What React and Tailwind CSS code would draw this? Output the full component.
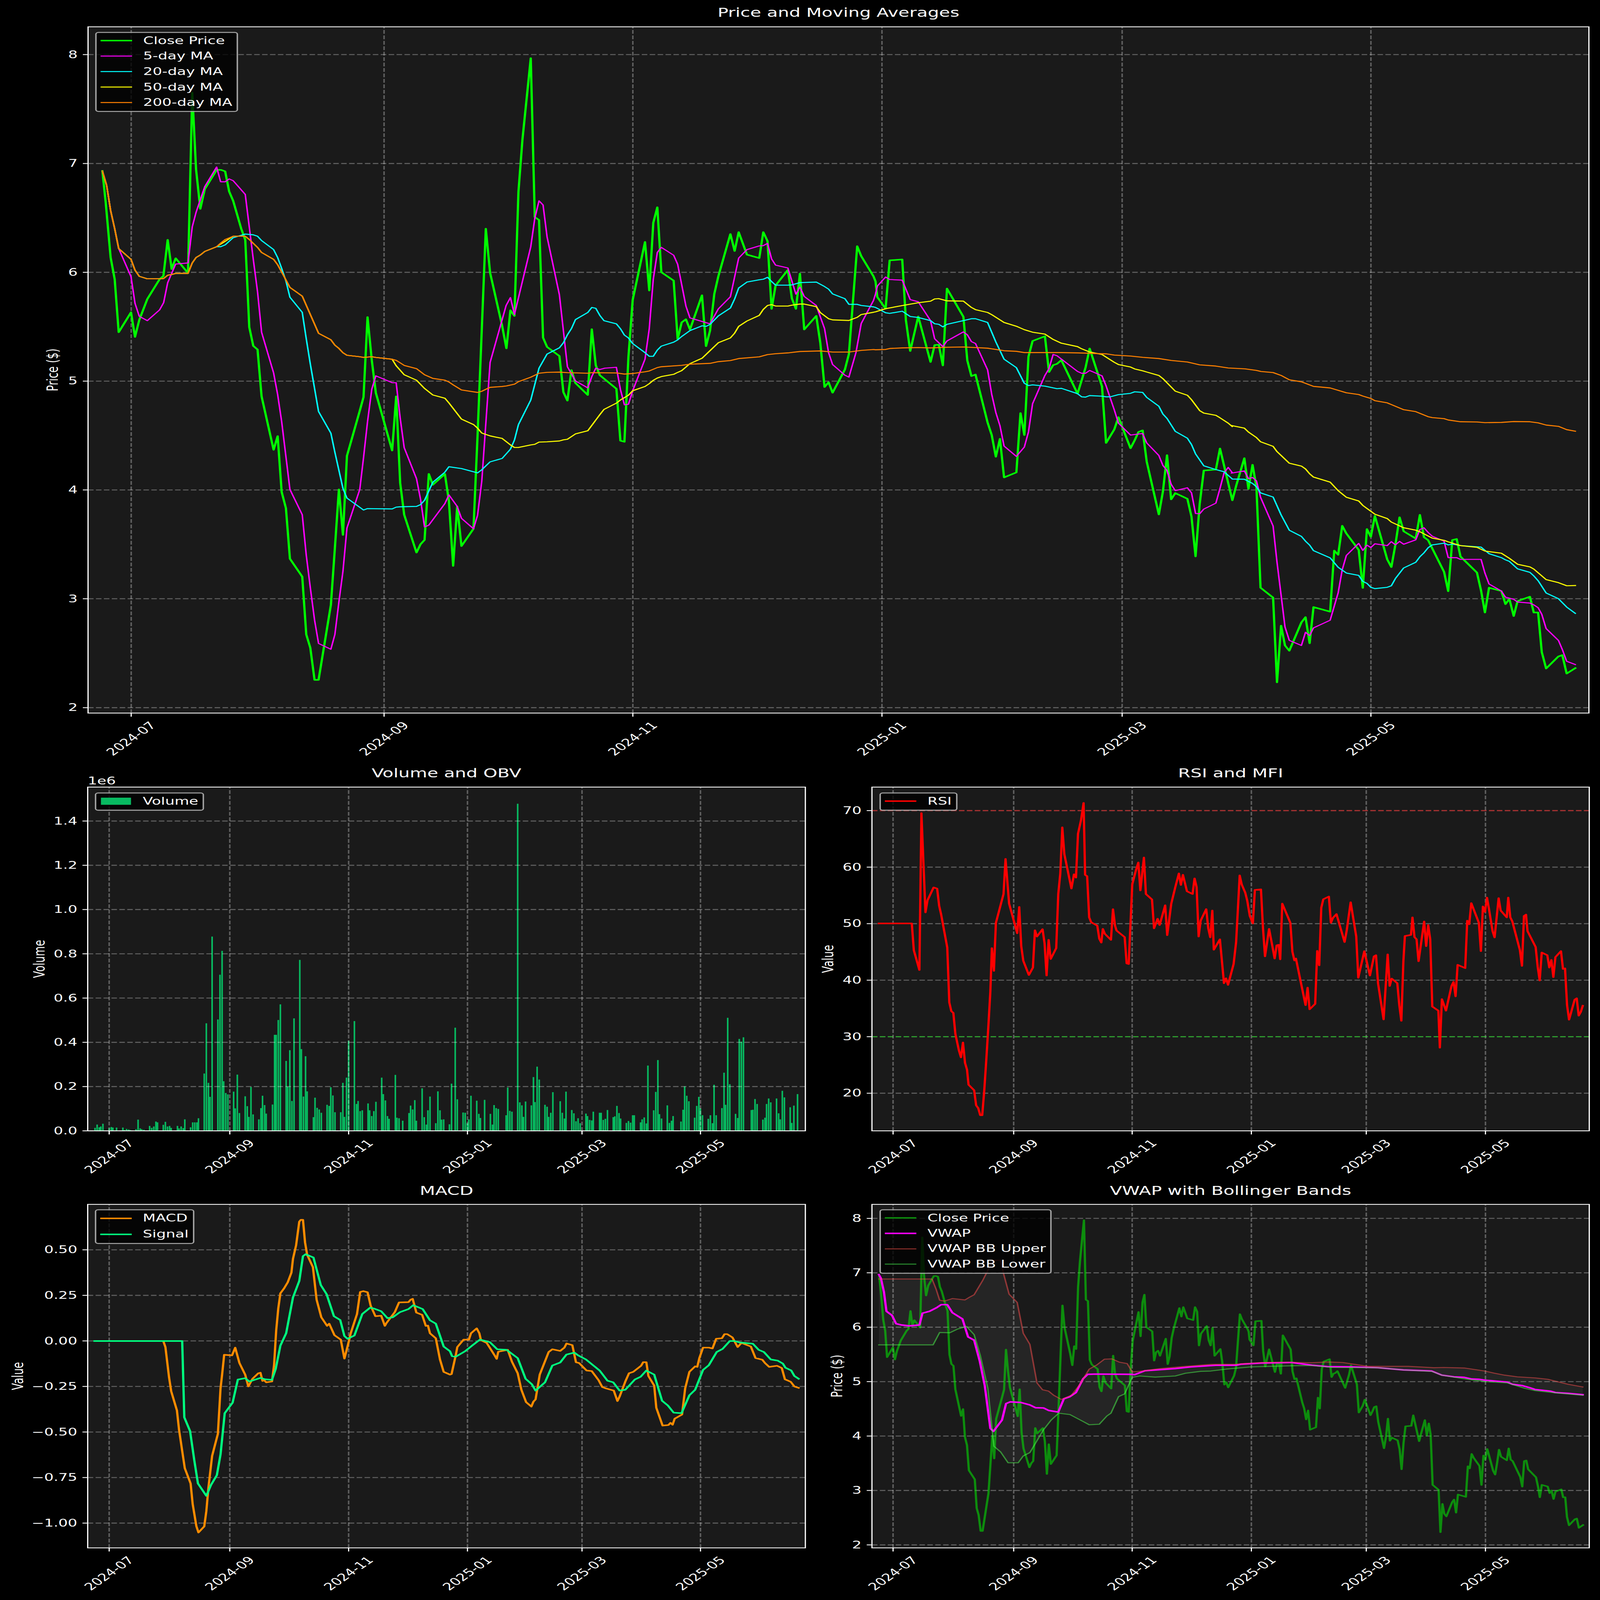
import React, { useState, useEffect } from 'react';

// reference traces: read off zoomed crops, "x,y" in crop pixels
const parse = (s, x0, y0, sx, sy) =>
  s.trim().split(/\s+/).map((p) => {
    const [a, b] = p.split(',').map(Number);
    return [x0 + a * sx, y0 + b * sy];
  });
const A = (s) => parse(s, 246, 600, 1100 / 1568, 2300 / 1568);
const B = (s) => parse(s, 1346, 200, 1100 / 1568, 1800 / 1568);
const C = (s) => parse(s, 2446, 800, 1000 / 1568, 2000 / 1568);
const D = (s) => parse(s, 3440, 1500, 1000 / 1568, 1400 / 1568);
const RZ = (s) => parse(s, 2250, 3050, 2220 / 1568, 1750 / 1568);
const MZ = (s) => parse(s, 0, 4750, 2300 / 1568, 1757 / 1568);
const VZ = (s) => parse(s, 2250, 4750, 2220 / 1568, 1757 / 1568);

const close = [
  ...A(`57,65 70,150 90,305 106,365 122,512 171,457 187,525 204,478 236,420 285,365 300,356 317,256 333,337 349,307 398,348 415,-152 430,60 447,170 465,115 512,62 530,62 546,66 562,122 578,148 610,225 626,256 642,498 658,550 675,560 691,690 739,838 755,800 771,955 788,1000 804,1140 853,1190 869,1350 885,1387 902,1476 918,1476 967,1268 983,1110 999,948 1015,1074 1031,855 1082,730 1097,692 1113,470 1130,590 1146,680 1211,840 1227,690 1243,930 1259,1018 1308,1123 1324,1100 1340,1088 1357,905 1373,935 1421,905 1437,980 1454,1160 1470,995 1487,1105 1535,1057 1551,800`),
  ...B(`16,636 33,792 81,980 98,1060 114,925 130,945 146,505 162,320 195,32 211,595 228,605 244,1022 260,1055 309,1087 325,1215 341,1245 357,1137 373,1183 422,1225 438,992 454,1120 470,1155 536,1203 552,1387 568,1391 584,1090 601,888 650,683 667,855 683,615 699,560 715,790 764,820 780,1027 796,968 813,957 829,993 877,872 893,1052 909,997 926,867 942,805 990,655 1007,715 1023,648 1056,728 1105,740 1121,648 1138,680 1154,920 1170,837 1219,782 1235,883 1251,920 1267,795 1284,993 1332,945 1348,1040 1365,1197 1381,1180 1397,1217 1446,1135 1462,1080 1495,698 1511,733 1560,805`),
  ...C(`0,270 8,320 44,357 62,203 117,200 133,393 152,492 187,382 241,527 259,473 277,472 295,538 313,293 385,383 402,522 420,572 438,567 491,720 509,760 527,829 545,772 563,895 617,879 635,690 652,760 670,510 688,460 742,445 760,559 778,537 795,533 814,521 885,628 903,585 920,545 938,484 992,605 1010,785 1046,742 1064,703 1117,802 1135,777 1152,750 1170,745 1188,845 1241,1013 1259,940 1277,824 1295,965 1313,945 1366,963 1384,1020 1402,1147 1420,980 1438,873 1491,870 1509,803 1563,968`),
  ...D(`22,530 57,407 75,547 93,437 110,540 128,997 183,1042 200,1428 218,1170 235,1260 254,1284 307,1155 325,1131 343,1250 360,1085 433,1106 451,828 468,847 486,715 504,750 558,825 576,998 594,730 611,765 629,670 683,868 701,903 719,800 737,676 755,740 808,773 826,665 844,767 862,780 932,925 950,1013 968,780 987,775 1004,855 1076,928 1094,1010 1111,1110 1129,997 1183,1012 1201,1072 1218,1048 1237,1126 1254,1058 1308,1038 1325,1110 1344,1110 1360,1290 1379,1365 1433,1310 1450,1304 1469,1388 1507,1363`),
];

const ma5 = [
  ...A(`57,65 74,105 90,175 106,225 122,280 171,358 187,432 204,468 236,480 285,450 301,430 317,375 349,323 398,320 415,220 430,180 465,108 512,54 528,95 546,95 562,87 578,92 626,130 642,220 658,310 675,400 691,512 739,625 755,685 771,760 804,948 853,1018 869,1130 885,1220 902,1310 918,1375 967,1391 983,1350 999,1260 1015,1175 1031,1055 1082,948 1097,860 1113,760 1130,670 1146,633 1211,652 1227,652 1243,750 1259,832 1308,918 1324,975 1340,1052 1357,1047 1421,987 1437,963 1470,995 1487,1028 1535,1057 1551,1020`),
  ...B(`0,1530 33,1110 97,908 114,880 130,940 195,700 211,600 228,537 244,552 260,665 309,870 341,1125 373,1175 422,1200 438,1160 454,1130 470,1135 490,1130 536,1127 552,1205 568,1260 584,1258 601,1210 650,1098 667,990 683,815 699,720 715,702 764,730 780,762 813,910 829,952 909,973 942,920 990,877 1023,740 1056,710 1105,697 1121,696 1138,688 1154,743 1170,765 1219,775 1251,868 1267,843 1284,876 1332,908 1365,990 1381,1075 1397,1117 1446,1155 1462,1162 1490,1075 1511,972 1560,890`),
  ...C(`0,310 8,285 44,256 62,264 117,266 152,328 187,335 241,395 259,453 295,478 313,460 385,431 402,440 420,462 438,468 491,552 509,630 527,688 545,730 563,795 617,828 652,798 670,750 688,660 742,570 760,548 778,503 795,507 885,557 903,563 920,563 938,554 992,571 1010,603 1046,680 1064,722 1117,760 1170,755 1188,785 1241,825 1259,857 1277,873 1295,917 1313,937 1366,928 1384,944 1402,1010 1420,1011 1438,996 1491,977 1509,930 1527,880 1545,863 1563,880`),
  ...D(`0,475 57,465 75,500 93,495 110,510 128,585 183,716 200,880 218,1030 235,1175 254,1237 307,1260 325,1200 343,1215 360,1180 433,1145 468,1020 486,915 504,850 558,795 576,827 594,803 611,814 629,797 683,805 701,787 719,802 737,786 755,799 808,779 826,732 844,724 862,745 880,762 932,785 950,860 987,860 1004,868 1094,868 1111,930 1129,980 1183,1012 1201,1040 1237,1050 1254,1062 1308,1067 1325,1075 1344,1088 1360,1118 1379,1183 1433,1237 1450,1278 1469,1332 1507,1347`),
];

const ma200Head = `57,65 74,105 90,175 106,225 122,280 171,310 187,340 204,357 236,364 285,364 301,363 317,354 333,352 349,349 398,349 415,320 430,305 447,298 465,288 512,275`;

const ma20 = [
  ...A(`${ma200Head} 528,275 546,270 578,250 626,240 658,242 675,246 691,258 739,283 755,305 771,335 788,370 804,415 853,457 869,530 885,600 918,732 967,792 983,845 1015,945 1031,972 1097,1005 1113,1001 1211,1002 1227,997 1243,996 1308,995 1324,990 1340,978 1373,928 1421,900 1437,885 1487,890 1551,902`),
  ...B(`0,1490 33,1462 81,1450 114,1417 130,1385 146,1330 195,1243 228,1130 260,1080 309,1058 325,1040 341,1012 357,990 373,958 422,933 438,915 454,918 470,943 487,962 536,973 552,990 568,1013 584,1023 601,1043 650,1075 667,1088 683,1088 699,1066 715,1052 764,1038 780,1030 796,1018 829,997 877,980 893,982 909,975 942,945 990,917 1007,885 1023,846 1056,825 1105,817 1121,815 1138,808 1154,823 1170,836 1219,836 1235,835 1267,827 1332,825 1365,841 1381,850 1397,867 1446,884 1462,904 1495,904 1511,908 1560,913`),
  ...C(`0,353 44,370 62,372 117,365 152,382 187,385 241,395 259,405 277,407 295,415 313,407 385,395 420,389 438,389 491,401 527,463 563,518 617,545 652,595 670,602 688,600 742,604 795,612 814,611 885,628 903,638 920,639 938,634 992,636 1010,638 1028,638 1064,631 1117,627 1135,622 1170,624 1188,640 1241,668 1259,693 1277,707 1313,748 1366,770 1384,790 1402,820 1438,858 1491,870 1527,877 1563,900`),
  ...D(`4,502 57,503 93,522 110,537 128,565 183,584 218,665 254,735 307,763 325,785 343,803 360,828 433,861 468,904 504,930 558,941 576,968 594,977 611,995 629,1001 683,995 701,988 719,955 755,907 808,881 826,856 844,838 862,815 880,802 932,794 950,802 968,798 1004,805 1094,812 1129,842 1183,860 1201,870 1218,877 1254,911 1308,927 1325,943 1344,965 1379,1021 1433,1047 1469,1085 1507,1114`),
];

const ma50 = [
  ...A(`${ma200Head} 578,246 626,246 642,255 675,277 691,291 739,310 755,325 771,345 804,388 853,412 918,515 967,533 983,548 999,557 1015,569 1031,576 1082,580 1097,582 1130,580 1146,582 1211,587 1227,605 1259,630 1308,645 1340,668 1373,686 1421,695 1437,708 1487,753 1535,768 1551,778`),
  ...B(`0,1360 33,1370 81,1379 114,1402 130,1411 146,1411 195,1402 211,1400 228,1392 260,1391 309,1388 325,1384 341,1382 373,1363 422,1352 470,1295 487,1276 536,1254 552,1243 584,1226 601,1210 650,1195 667,1185 683,1173 699,1165 715,1160 764,1152 780,1145 796,1139 829,1114 877,1095 909,1068 942,1040 990,1023 1007,1006 1023,982 1056,963 1105,943 1121,922 1138,908 1154,905 1170,910 1219,910 1235,907 1267,903 1284,903 1332,912 1348,933 1381,955 1397,959 1462,961 1495,950 1511,940 1560,932`),
  ...C(`0,367 44,357 117,347 187,338 241,333 259,326 277,325 313,332 385,333 420,353 438,360 491,369 509,376 563,401 617,413 652,424 688,432 742,438 778,455 814,467 885,478 903,485 938,495 992,503 1046,528 1064,535 1117,543 1135,549 1170,555 1188,559 1241,570 1259,580 1313,620 1366,633 1384,647 1420,682 1438,690 1491,697 1509,705 1545,722 1563,733`),
  ...D(`0,258 57,270 75,288 110,313 128,332 183,353 200,377 254,430 307,443 325,456 343,478 360,493 433,516 468,555 504,585 558,602 576,622 629,662 683,682 701,698 755,724 808,735 826,742 880,771 932,781 950,788 1004,805 1076,813 1111,830 1183,840 1218,863 1254,890 1308,902 1325,912 1379,960 1433,974 1469,988 1507,987`),
];

const ma200 = [
  ...A(`${ma200Head} 528,265 546,255 578,246 626,246 642,255 675,277 691,291 739,310 755,325 771,345 804,388 853,412 918,515 967,533 983,548 999,557 1015,569 1031,576 1082,580 1097,582 1130,580 1146,582 1211,587 1227,590 1259,604 1308,613 1340,630 1373,640 1421,645 1437,650 1454,658 1487,672 1551,679`),
  ...B(`0,1212 16,1205 33,1198 81,1195 98,1193 130,1187 146,1178 195,1162 228,1148 260,1145 309,1144 341,1146 422,1148 438,1146 536,1147 568,1151 601,1149 650,1143 667,1140 699,1128 715,1125 796,1120 829,1116 909,1113 942,1107 990,1103 1023,1096 1105,1090 1138,1082 1170,1079 1219,1076 1267,1071 1348,1069 1397,1073 1462,1073 1511,1067 1560,1064`),
  ...C(`0,488 44,487 62,484 117,482 187,481 241,482 313,480 385,479 438,481 491,483 563,491 617,493 652,497 814,497 885,498 1010,501 1046,505 1117,508 1170,512 1241,516 1295,522 1366,527 1420,536 1491,540 1545,546`),
  ...D(`60,0 110,7 130,12 183,17 218,30 254,50 307,59 360,80 433,87 504,109 558,117 576,124 611,135 629,145 683,155 755,186 808,195 862,218 880,222 932,227 950,233 1004,241 1076,242 1111,245 1183,244 1237,240 1308,241 1344,246 1379,256 1433,262 1469,277 1507,284`),
];

const rsi = RZ(`145,632 210,632 214,730 225,802 229,230 237,592 241,548 253,501 260,505 264,568 268,600 280,720 284,920 288,952 292,958 296,1035 303,1095 307,1120 311,1066 315,1140 319,1165 322,1220 333,1240 337,1295 341,1305 345,1331 349,1331 353,1240 357,1130 361,1010 365,880 368,722 372,805 376,630 391,525 395,397 402,560 414,640 418,668 422,572 426,715 430,768 441,820 449,793 453,657 457,680 468,653 472,705 476,822 480,692 484,762 495,722 499,525 503,450 507,282 511,380 515,415 525,505 530,453 534,465 538,305 544,255 549,193 552,455 556,460 560,610 564,628 576,640 580,688 584,702 587,652 591,670 603,692 607,580 611,640 614,658 630,682 634,778 638,780 645,490 652,440 657,410 661,512 668,392 672,525 684,545 688,650 695,615 699,638 710,566 714,675 722,560 730,500 737,450 741,492 745,455 753,515 764,525 768,468 772,500 776,680 780,622 791,580 795,650 799,683 803,585 806,728 818,690 826,850 830,832 834,856 845,780 850,700 857,457 861,490 868,520 872,550 877,605 883,632 887,510 899,508 903,650 907,752 915,652 922,720 926,760 930,712 934,710 937,763 941,560 957,630 961,735 965,767 968,760 987,930 991,866 995,945 1006,925 1010,732 1014,785 1018,575 1022,544 1033,534 1037,630 1041,612 1048,598 1064,700 1068,660 1076,555 1087,680 1091,830 1103,733 1114,822 1122,752 1126,748 1130,850 1141,982 1149,745 1153,860 1157,833 1168,850 1172,930 1176,987 1180,770 1183,678 1195,674 1198,610 1202,682 1206,690 1210,770 1221,625 1225,715 1229,638 1233,690 1237,935 1249,950 1252,1085 1256,908 1264,950 1275,860 1279,845 1283,898 1287,783 1302,795 1306,622 1310,635 1314,558 1329,630 1333,733 1337,570 1341,590 1345,538 1349,580 1356,660 1360,683 1368,540 1372,585 1384,610 1387,538 1391,610 1395,625 1410,730 1414,787 1418,605 1422,600 1425,660 1441,718 1445,790 1449,840 1453,738 1464,748 1468,793 1472,765 1476,828 1480,755 1491,733 1495,798 1499,796 1503,930 1507,983 1518,910 1522,905 1526,968 1530,955 1534,932`);

const macd = MZ(`180,628 311,628 315,650 322,760 326,810 337,880 341,950 348,1040 352,1090 363,1145 367,1220 374,1300 378,1323 389,1301 393,1245 397,1160 404,1045 415,965 420,800 423,750 427,678 442,680 448,652 456,708 467,750 473,793 481,765 492,745 496,743 500,773 503,770 507,778 518,775 522,715 526,590 530,510 534,455 541,437 548,415 555,380 558,330 564,280 570,195 573,188 577,188 581,270 585,315 596,360 603,478 612,542 623,573 627,565 637,607 649,623 656,692 663,640 668,600 680,530 686,450 692,447 700,451 706,500 715,538 726,536 733,573 736,563 752,523 760,488 778,487 782,478 786,475 793,525 804,533 811,573 815,572 819,600 830,618 838,695 845,740 857,750 860,748 868,680 871,650 883,623 893,623 897,600 908,582 913,600 916,625 927,635 942,680 946,693 949,667 967,660 975,703 986,745 993,805 1002,850 1012,866 1016,848 1020,840 1028,750 1045,668 1052,658 1067,664 1075,652 1079,637 1090,643 1097,705 1103,708 1117,735 1127,737 1140,770 1147,795 1154,800 1169,808 1176,846 1180,830 1191,775 1198,745 1206,740 1221,718 1225,705 1231,705 1235,755 1246,790 1250,870 1262,935 1273,933 1277,925 1281,932 1285,910 1299,895 1305,800 1313,740 1324,720 1328,722 1332,690 1339,652 1350,652 1357,655 1364,620 1375,618 1380,603 1385,603 1395,615 1405,650 1412,635 1430,648 1439,690 1452,696 1457,708 1465,722 1480,718 1489,726 1495,767 1506,776 1513,793 1521,798`);

const signal = MZ(`180,628 347,628 351,905 362,955 370,1060 377,1145 393,1190 402,1150 413,1115 420,1040 428,890 443,852 453,768 467,763 475,775 496,762 505,767 518,769 525,730 534,645 545,600 558,470 570,410 577,320 582,313 597,325 611,425 622,458 636,538 648,552 656,610 662,620 675,608 690,530 705,507 712,510 726,520 738,545 748,542 762,523 778,512 787,498 805,512 819,553 830,565 845,648 857,665 861,683 868,685 886,665 899,645 914,623 933,632 947,658 965,660 986,690 1001,765 1013,785 1020,808 1038,778 1052,717 1067,706 1079,677 1094,670 1101,680 1116,695 1142,735 1157,772 1168,778 1180,808 1191,805 1209,768 1220,758 1231,735 1246,750 1261,845 1272,862 1283,888 1298,890 1313,825 1324,805 1339,733 1350,716 1365,668 1376,657 1390,628 1399,628 1408,633 1434,638 1445,660 1455,668 1468,695 1481,699 1491,710 1496,725 1507,735 1513,755 1521,765`);

const vwap = VZ(`145,387 149,400 155,450 160,520 171,535 179,565 190,570 205,573 225,570 231,527 245,520 259,507 268,496 280,496 290,525 310,548 321,613 333,625 344,700 354,790 365,945 371,956 388,915 396,855 404,849 425,851 443,860 454,870 470,871 480,880 499,886 510,838 522,830 534,815 548,765 557,749 572,748 640,749 650,750 670,736 700,732 730,728 760,722 810,716 850,716 860,712 900,708 960,706 1000,716 1030,721 1080,722 1130,725 1180,733 1236,737 1256,752 1280,758 1300,760 1315,766 1330,767 1340,770 1385,777 1395,785 1415,790 1430,798 1440,804 1470,810 1480,815 1505,818 1534,823`);

const bbUpper = VZ(`145,403 250,403 258,440 265,480 275,483 290,474 315,479 325,468 333,460 350,408 370,335 385,335 392,390 402,458 418,488 430,600 443,640 457,780 468,805 480,810 490,825 505,840 525,825 540,790 560,730 575,715 590,694 605,693 620,705 635,710 645,740 660,738 700,728 750,720 800,713 850,712 900,706 950,705 1000,707 1030,704 1060,706 1110,720 1190,720 1240,725 1260,724 1300,726 1340,737 1360,745 1380,752 1405,758 1440,762 1465,767 1505,785 1534,795`);

const bbLower = VZ(`145,642 252,642 265,597 285,598 300,585 318,575 333,605 345,680 360,800 372,1010 385,1030 400,1070 420,1070 430,1045 443,1033 470,950 485,915 500,890 522,895 548,920 560,932 580,930 595,900 603,890 618,830 630,820 645,760 660,755 690,759 730,755 750,745 780,738 800,737 830,730 880,722 960,718 1000,717 1040,724 1130,725 1180,733 1236,738 1256,752 1300,765 1340,775 1385,780 1420,800 1440,808 1480,816 1534,825`);

// same close series, moved into the VWAP axes
const closeSmall = close.map(([x, y]) => [
  2495 + ((x - 366.5) / 11.395) * 5.444,
  4955 + ((y - 222) / 442.7) * 221.3,
]);

const volume = `181:1377 185:1365 189:1375 192:1372 196:1362 208:1378 212:1374 215:1376 222:1376 234:1376 237:1385 241:1381 245:1383 248:1385 259:1382 263:1347 267:1379 270:1382 274:1384 285:1370 289:1377 293:1372 297:1354 300:1357 311:1366 315:1355 319:1372 323:1370 326:1377 338:1370 341:1379 345:1372 349:1378 352:1346 363:1375 367:1357 371:1357 375:1357 378:1342 389:1179 393:996 397:1213 400:1264 404:680 415:982 419:819 423:732 426:1207 430:1250 434:1255 445:1245 448:1306 452:1183 456:1323 467:1262 471:1298 474:1337 478:1228 482:1328 493:1346 497:1305 500:1260 504:1294 507:1325 519:1292 523:1038 526:1038 530:984 534:927 545:1133 548:1227 552:1094 556:1279 560:978 571:765 574:1090 578:1263 582:1116 585:1244 597:1338 600:1267 604:1304 608:1310 612:1322 623:1293 627:1297 630:1229 634:1259 638:1320 649:1320 653:1213 656:1337 660:1194 664:1060 675:988 679:1290 682:1279 686:1316 690:1313 701:1288 704:1313 708:1334 712:1316 716:1282 727:1194 730:1254 734:1277 738:1334 741:1344 753:1184 756:1340 760:1342 767:1351 779:1323 782:1296 786:1310 790:1276 793:1351 804:1233 808:1338 812:1365 815:1313 819:1263 830:1360 834:1244 838:1313 841:1347 845:1346 856:1364 860:1216 867:1012 871:1273 882:1321 886:1322 890:1360 893:1346 897:1260 908:1278 912:1326 915:1341 923:1275 934:1326 938:1365 941:1294 945:1305 949:1308 964:1331 967:1230 971:1315 975:1318 986:196 990:1284 994:1295 997:1337 1001:1281 1012:1295 1016:1192 1019:1283 1023:1154 1027:1201 1038:1293 1042:1300 1045:1337 1049:1322 1053:1247 1067:1280 1071:1322 1075:1343 1078:1245 1089:1312 1093:1324 1097:1353 1101:1342 1105:1360 1116:1325 1119:1334 1123:1348 1127:1350 1130:1318 1142:1322 1145:1322 1149:1348 1153:1344 1157:1312 1168:1338 1171:1335 1175:1297 1179:1323 1182:1343 1193:1359 1197:1352 1201:1358 1205:1331 1208:1331 1220:1357 1223:1346 1227:1339 1231:1361 1234:1150 1245:1313 1249:1246 1253:1130 1256:1327 1260:1343 1271:1295 1275:1359 1279:1351 1282:1334 1297:1354 1301:1311 1304:1226 1308:1260 1312:1280 1323:1340 1327:1297 1331:1264 1334:1306 1338:1331 1349:1344 1353:1331 1357:1360 1360:1220 1364:1331 1375:1305 1379:1176 1382:1293 1386:976 1390:1218 1401:1326 1405:1341 1408:1053 1412:1063 1416:1047 1431:1312 1434:1311 1438:1272 1442:1290 1453:1347 1457:1340 1460:1290 1464:1270 1468:1284 1479:1270 1483:1324 1486:1346 1490:1242 1494:1266 1505:1302 1508:1359 1512:1296 1519:1254`
  .split(' ')
  .map((p) => {
    const [a, b] = p.split(':').map(Number);
    return { x: (a * 2300) / 1568, top: 3050 + (b * 1750) / 1568 };
  });

const DATES = ['2024-07', '2024-09', '2024-11', '2025-01', '2025-03', '2025-05'];
const FONT = 41.67;
const PAGE_W = 4470;
const PAGE_H = 6507;

const toPoints = (pts) => pts.map(([x, y]) => `${x.toFixed(1)},${y.toFixed(1)}`).join(' ');

const Line = ({ pts, color, width = 6.25, opacity = 1 }) => (
  <polyline
    points={toPoints(pts)}
    fill="none"
    stroke={color}
    strokeWidth={width}
    strokeOpacity={opacity}
    strokeLinejoin="round"
    strokeLinecap="square"
  />
);

const Legend = ({ items, className, rowClass }) => (
  <div className={`absolute border-[4px] border-[#cccccc]/80 rounded-[9px] bg-black/80 pb-[3px] pl-[11px] pr-[12px] flex flex-col text-white ${className}`}>
    {items.map((item) => (
      <div key={item.label} className={`flex items-center gap-[31px] whitespace-nowrap ${rowClass}`}>
        <div className="w-[88px] flex justify-center">
          <div className={item.swatch}></div>
        </div>
        <span>{item.label}</span>
      </div>
    ))}
  </div>
);

const Chart = ({ title, titleClass, axesClass, box, xTicks, yTicks, yLabel, under, legend, offset, children }) => {
  const { L, T, W, H } = box;
  const R = L + W;
  const Bt = T + H;
  return (
    <div className="flex flex-col">
      <div className={`flex items-center justify-center text-white text-[50px] ${titleClass}`}>{title}</div>
      <div className={`relative bg-[#1a1a1a] ${axesClass}`}>
        <svg className="block overflow-visible" width={W} height={H} viewBox={`${L} ${T} ${W} ${H}`} fontFamily="DejaVu Sans" fontSize={FONT} fill="#ffffff">
          {under}
          {xTicks.map((x) => (
            <line key={x} x1={x} x2={x} y1={Bt} y2={T} stroke="#fff" strokeOpacity="0.3" strokeWidth="4.17" strokeDasharray="15.4 6.7" />
          ))}
          {yTicks.map(([y]) => (
            <line key={y} x1={L} x2={R} y1={y} y2={y} stroke="#fff" strokeOpacity="0.3" strokeWidth="4.17" strokeDasharray="15.4 6.7" />
          ))}
          {children}
          <rect x={L} y={T} width={W} height={H} fill="none" stroke="#fff" strokeWidth="3.33" />
          {xTicks.map((x, i) => (
            <g key={x}>
              <line x1={x} x2={x} y1={Bt} y2={Bt + 14.6} stroke="#fff" strokeWidth="3.33" />
              <text transform={`translate(${x} ${Bt + 104}) rotate(-45)`} textAnchor="middle" dominantBaseline="central">
                {DATES[i]}
              </text>
            </g>
          ))}
          {yTicks.map(([y, label]) => (
            <g key={y}>
              <line x1={L - 14.6} x2={L} y1={y} y2={y} stroke="#fff" strokeWidth="3.33" />
              <text x={L - 29} y={y} textAnchor="end" dominantBaseline="central">
                {label}
              </text>
            </g>
          ))}
          <text transform={`translate(${yLabel.x} ${T + H / 2}) rotate(-90)`} textAnchor="middle" dominantBaseline="central">
            {yLabel.text}
          </text>
          {offset}
        </svg>
        {legend}
      </div>
    </div>
  );
};

const smallLeftTicks = [305, 642, 974, 1306, 1626, 1957];
const smallRightTicks = [2495, 2832, 3163, 3496, 3817, 4150];
const lineSwatch = 'w-[88px] h-[4px]';

// The figure is laid out at 4470x6507. The sandbox window is really 4096x4096, so it gets
// fitted per axis (squashed, about 0.92 x 0.63). In a full size window both scales are 1.
const fitScale = () =>
  `scale(${Math.min(1, window.innerWidth / PAGE_W)}, ${Math.min(1, window.innerHeight / PAGE_H)})`;

export default function App() {
  const [scale, setScale] = useState(fitScale);

  useEffect(() => {
    const onResize = () => setScale(fitScale());
    window.addEventListener('resize', onResize);
    return () => window.removeEventListener('resize', onResize);
  }, []);

  return (
    <div className="w-screen h-screen bg-black overflow-hidden">
      <div
        className="w-[4470px] h-[6507px] bg-black font-['DejaVu_Sans',sans-serif] text-[41.67px] overflow-hidden origin-top-left"
        style={{ transform: scale }}
      >
        <div className="h-[3095px] pl-[246px]">
          <Chart
            title="Price and Moving Averages"
            titleClass="w-[4193px] h-[109px] pb-[7px]"
            axesClass="w-[4193px] h-[2791px]"
            box={{ L: 246, T: 109, W: 4193, H: 2791 }}
            xTicks={[366.5, 1073, 1768, 2464, 3135, 3830]}
            yTicks={[[222, '8'], [665, '7'], [1107.5, '6'], [1550, '5'], [1992.5, '4'], [2435, '3'], [2878, '2']]}
            yLabel={{ x: 148, text: 'Price ($)' }}
            legend={
              <Legend
                className="left-[20px] top-[21px]"
                rowClass="h-[62.8px]"
                items={[
                  { label: 'Close Price', swatch: 'w-[88px] h-[6px] bg-[#00ff00]' },
                  { label: '5-day MA', swatch: `${lineSwatch} bg-[#ff00ff]` },
                  { label: '20-day MA', swatch: `${lineSwatch} bg-[#00ffff]` },
                  { label: '50-day MA', swatch: `${lineSwatch} bg-[#ffff00]` },
                  { label: '200-day MA', swatch: `${lineSwatch} bg-[#ff8000]` },
                ]}
              />
            }
          >
            <Line pts={close} color="#00ff00" />
            <Line pts={ma5} color="#ff00ff" width={4.17} />
            <Line pts={ma20} color="#00ffff" width={4.17} />
            <Line pts={ma50} color="#ffff00" width={4.17} />
            <Line pts={ma200} color="#ff8000" width={4.17} />
          </Chart>
        </div>

        <div className="grid grid-cols-[2285px_2185px] grid-rows-[1697px_1697px]">
          <div className="pl-[245px]">
            <Chart
              title="Volume and OBV"
              titleClass="w-[2005px] h-[106px] pb-[6px]"
              axesClass="w-[2005px] h-[1398px]"
              box={{ L: 245, T: 3201, W: 2005, H: 1398 }}
              xTicks={smallLeftTicks}
              yTicks={[[4599, '0.0'], [4419, '0.2'], [4239, '0.4'], [4059, '0.6'], [3879, '0.8'], [3699, '1.0'], [3519, '1.2'], [3339, '1.4']]}
              yLabel={{ x: 110, text: 'Volume' }}
              under={volume.map((b) => (
                <rect key={b.x} x={b.x - 2.2} y={b.top} width="4.4" height={4599 - b.top} fill="#00ff7f" fillOpacity="0.7" />
              ))}
              offset={<text x="245" y="3190">1e6</text>}
              legend={
                <Legend
                  className="left-[20px] top-[22px]"
                  rowClass="h-[62.8px]"
                  items={[{ label: 'Volume', swatch: 'w-[84px] h-[29px] bg-[#08ba61]' }]}
                />
              }
            />
          </div>

          <div className="pl-[151px]">
            <Chart
              title="RSI and MFI"
              titleClass="w-[2004px] h-[106px] pb-[6px]"
              axesClass="w-[2004px] h-[1398px]"
              box={{ L: 2436, T: 3201, W: 2004, H: 1398 }}
              xTicks={smallRightTicks}
              yTicks={[[3296.6, '70'], [3526.5, '60'], [3756.4, '50'], [3986.3, '40'], [4216.2, '30'], [4446, '20']]}
              yLabel={{ x: 2314, text: 'Value' }}
              legend={
                <Legend
                  className="left-[21px] top-[22px]"
                  rowClass="h-[62.8px]"
                  items={[{ label: 'RSI', swatch: 'w-[88px] h-[6px] bg-[#ff0000]' }]}
                />
              }
            >
              <line x1="2436" x2="4440" y1="3296.6" y2="3296.6" stroke="#ff0000" strokeOpacity="0.5" strokeWidth="4.17" strokeDasharray="15.4 6.7" />
              <line x1="2436" x2="4440" y1="4216.2" y2="4216.2" stroke="#00ff00" strokeOpacity="0.5" strokeWidth="4.17" strokeDasharray="15.4 6.7" />
              <Line pts={rsi} color="#ff0000" />
            </Chart>
          </div>

          <div className="pl-[245px]">
            <Chart
              title="MACD"
              titleClass="w-[2005px] h-[106px] pb-[6px]"
              axesClass="w-[2005px] h-[1397px]"
              box={{ L: 245, T: 4898, W: 2005, H: 1397 }}
              xTicks={smallLeftTicks}
              yTicks={[[5082.8, '0.50'], [5268, '0.25'], [5453.3, '0.00'], [5638.5, '\u22120.25'], [5823.8, '\u22120.50'], [6009, '\u22120.75'], [6194.3, '\u22121.00']]}
              yLabel={{ x: 50, text: 'Value' }}
              legend={
                <Legend
                  className="left-[20px] top-[20px]"
                  rowClass="h-[65px]"
                  items={[
                    { label: 'MACD', swatch: 'w-[88px] h-[6px] bg-[#ff8c00]' },
                    { label: 'Signal', swatch: 'w-[88px] h-[6px] bg-[#00ff7f]' },
                  ]}
                />
              }
            >
              <Line pts={macd} color="#ff8c00" />
              <Line pts={signal} color="#00ff7f" />
            </Chart>
          </div>

          <div className="pl-[151px]">
            <Chart
              title="VWAP with Bollinger Bands"
              titleClass="w-[2004px] h-[106px] pb-[6px]"
              axesClass="w-[2004px] h-[1397px]"
              box={{ L: 2436, T: 4898, W: 2004, H: 1397 }}
              xTicks={smallRightTicks}
              yTicks={[[4955, '8'], [5176.3, '7'], [5397.6, '6'], [5618.9, '5'], [5840.2, '4'], [6061.5, '3'], [6282.9, '2']]}
              yLabel={{ x: 2339, text: 'Price ($)' }}
              under={<polygon points={toPoints([...bbUpper, ...[...bbLower].reverse()])} fill="#ffffff" fillOpacity="0.05" />}
              legend={
                <Legend
                  className="left-[21px] top-[20px]"
                  rowClass="h-[62.7px]"
                  items={[
                    { label: 'Close Price', swatch: 'w-[88px] h-[6px] bg-[#0d8c0d]' },
                    { label: 'VWAP', swatch: 'w-[88px] h-[6px] bg-[#ff00ff]' },
                    { label: 'VWAP BB Upper', swatch: `${lineSwatch} bg-[#8c2f2a]` },
                    { label: 'VWAP BB Lower', swatch: `${lineSwatch} bg-[#2a8c2f]` },
                  ]}
                />
              }
            >
              <Line pts={closeSmall} color="#00ff00" opacity={0.5} />
              <Line pts={vwap} color="#ff00ff" />
              <Line pts={bbUpper} color="#ff4d4d" width={4.17} opacity={0.5} />
              <Line pts={bbLower} color="#4dff4d" width={4.17} opacity={0.5} />
            </Chart>
          </div>
        </div>
      </div>
    </div>
  );
}
